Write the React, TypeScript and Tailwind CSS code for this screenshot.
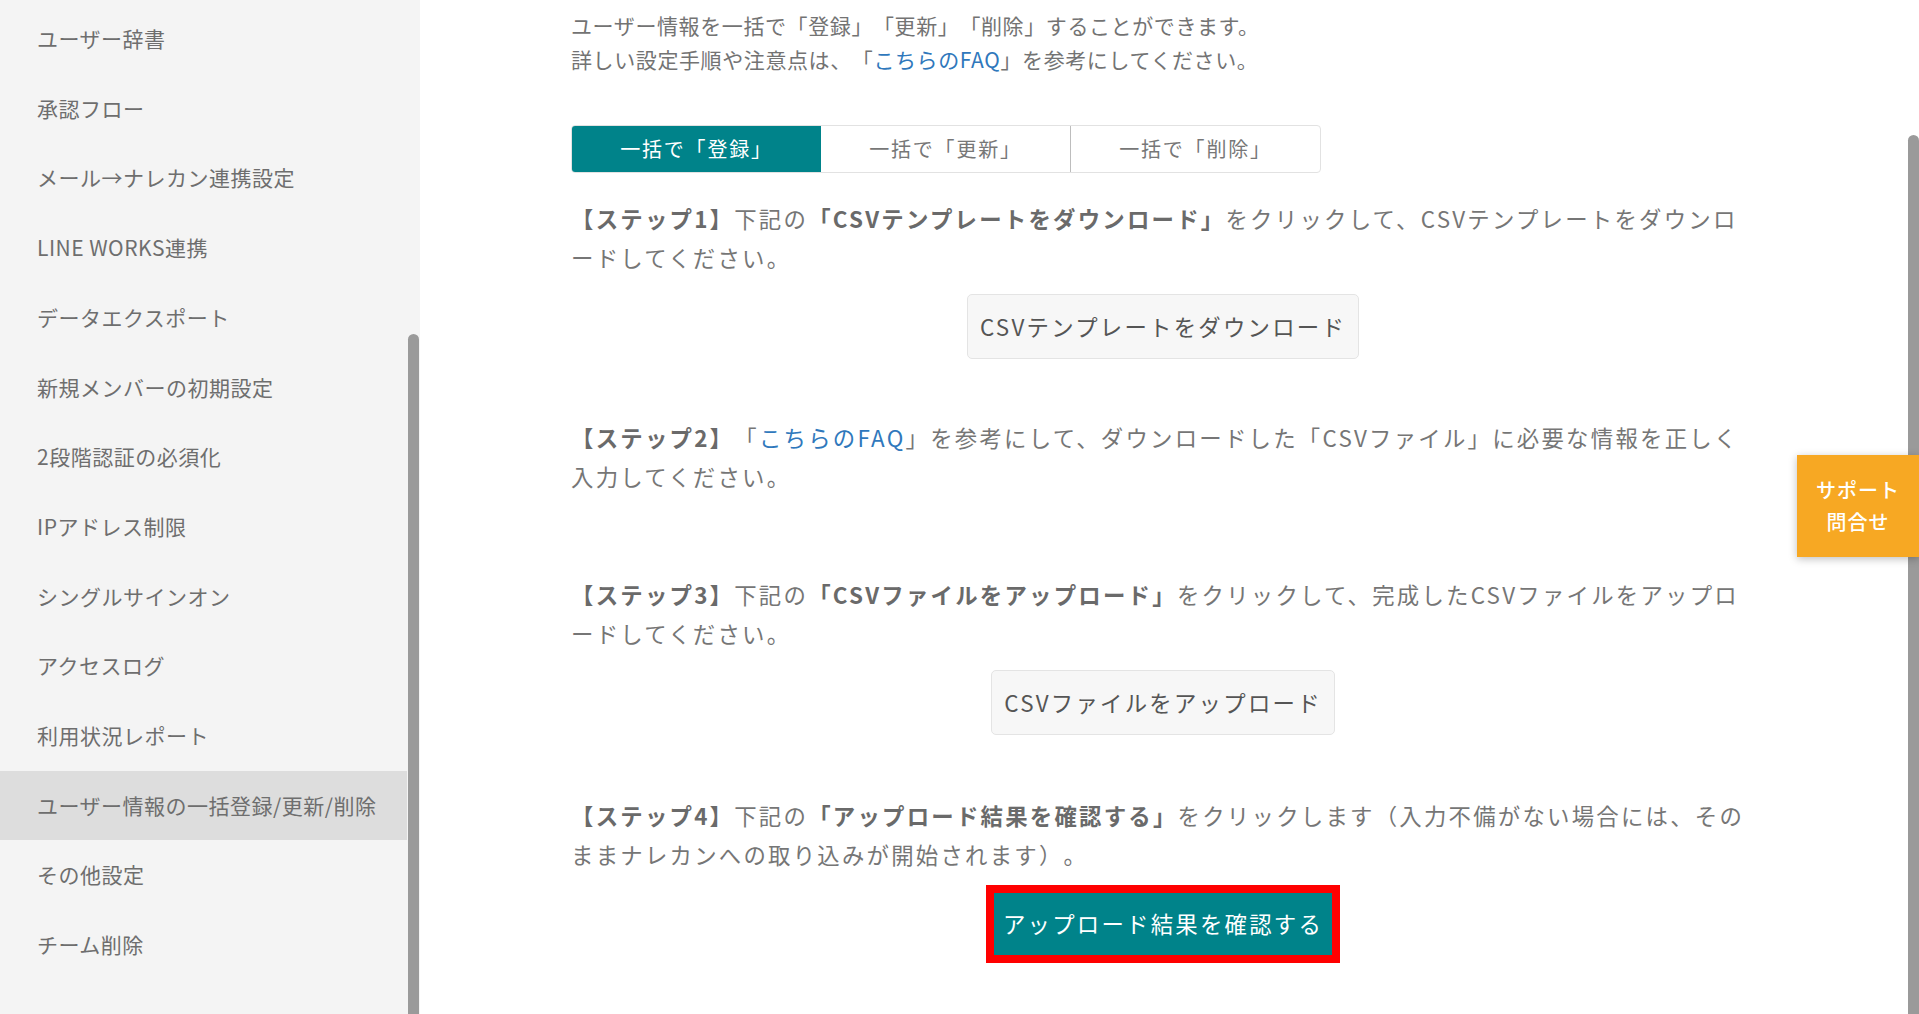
import React from "react"

const menu = [
	"ユーザー辞書",
	"承認フロー",
	"メール→ナレカン連携設定",
	"LINE WORKS連携",
	"データエクスポート",
	"新規メンバーの初期設定",
	"2段階認証の必須化",
	"IPアドレス制限",
	"シングルサインオン",
	"アクセスログ",
	"利用状況レポート",
	"ユーザー情報の一括登録/更新/削除",
	"その他設定",
	"チーム削除",
]

const active = "ユーザー情報の一括登録/更新/削除"

function Sidebar() {
	return (
		<aside className="flex h-full w-[420px] shrink-0 bg-[#f4f4f4]">
			<nav className="w-[407px] pt-[4px]">
				{menu.map((item) => (
					<div
						key={item}
						className={
							item === active
								? "flex h-[69.7px] items-center bg-[#dddddd] pl-[37px] text-[21px] tracking-[0.5px] text-[#6e6e6e]"
								: "flex h-[69.7px] items-center pl-[37px] text-[21px] tracking-[0.5px] text-[#6e6e6e]"
						}
					>
						{item}
					</div>
				))}
			</nav>
			{/* scrollbar */}
			<div className="flex w-[13px] flex-col pl-[1px]">
				<div className="mt-[334px] w-[11px] flex-1 rounded-t-full bg-[#9a9a9a]" />
			</div>
		</aside>
	)
}

function Faq() {
	return <a className="text-[#2f78bc]">こちらのFAQ</a>
}

function Step({ children }: { children: React.ReactNode }) {
	return <p className="text-[22.4px] leading-[39px] tracking-[0.1em] text-[#767676]">{children}</p>
}

function Bold({ children }: { children: React.ReactNode }) {
	return <b className="font-bold text-[#6a6a6a]">{children}</b>
}

function GrayButton({ label }: { label: string }) {
	return (
		<div className="flex justify-center">
			<button className="h-[65px] rounded-[5px] border border-[#e4e4e4] bg-[#f7f7f7] px-[12px] text-[22.4px] tracking-[0.1em] text-[#555]">
				{label}
			</button>
		</div>
	)
}

function Tabs() {
	return (
		<div className="flex h-[48px] w-[750px] overflow-hidden rounded-[4px] border border-[#e2e2e2] text-[20px] tracking-[1.8px]">
			<div className="flex flex-1 items-center justify-center bg-[#00838a] text-white">一括で「登録」</div>
			<div className="flex flex-1 items-center justify-center text-[#777]">一括で「更新」</div>
			<div className="flex flex-1 items-center justify-center border-l border-[#bdbdbd] text-[#777]">一括で「削除」</div>
		</div>
	)
}

export default function App() {
	return (
		<div
			lang="ja"
			className="flex h-[1014px] w-full overflow-hidden bg-white font-['Noto_Sans_CJK_JP','Noto_Sans',sans-serif] [line-break:loose] [text-spacing-trim:space-all]"
		>
			<Sidebar />

			<main className="relative flex flex-1">
				<div className="flex-1 pl-[151px] pt-[8px]">
					<div className="w-[1184px]">
						<p className="text-[21px] leading-[34px] tracking-[0.6px] text-[#737373]">
							ユーザー情報を一括で「登録」「更新」「削除」することができます。
							<br />
							詳しい設定手順や注意点は、「<Faq />」を参考にしてください。
						</p>

						<div className="mt-[49px]">
							<Tabs />
						</div>

						<div className="mt-[26px]">
							<Step>
								<Bold>【ステップ1】</Bold>下記の<Bold>「CSVテンプレートをダウンロード」</Bold>
								をクリックして、CSVテンプレートをダウンロードしてください。
							</Step>
						</div>
						<div className="mt-[17px]">
							<GrayButton label="CSVテンプレートをダウンロード" />
						</div>

						<div className="mt-[59px]">
							<Step>
								<Bold>【ステップ2】</Bold>「<Faq />
								」を参考にして、ダウンロードした「CSVファイル」に必要な情報を正しく入力してください。
							</Step>
						</div>

						<div className="mt-[79px]">
							<Step>
								<Bold>【ステップ3】</Bold>下記の<Bold>「CSVファイルをアップロード」</Bold>
								をクリックして、完成したCSVファイルをアップロードしてください。
							</Step>
						</div>
						<div className="mt-[17px]">
							<GrayButton label="CSVファイルをアップロード" />
						</div>

						<div className="mt-[61px]">
							<Step>
								<Bold>【ステップ4】</Bold>下記の<Bold>「アップロード結果を確認する」</Bold>
								をクリックします（入力不備がない場合には、そのままナレカンへの取り込みが開始されます）。
							</Step>
						</div>
						<div className="mt-[11px] flex justify-center">
							<div className="border-[8px] border-[#ff0000]">
								<button className="h-[62px] bg-[#00838a] px-[9px] text-[22.4px] tracking-[0.1em] text-white">
									アップロード結果を確認する
								</button>
							</div>
						</div>
					</div>
				</div>

				{/* page scrollbar */}
				<div className="flex w-[11px] flex-col">
					<div className="mt-[135px] flex-1 rounded-t-full bg-[#9a9a9a]" />
				</div>

				{/* support widget */}
				<div className="absolute right-0 top-[455px] flex h-[102px] w-[122px] flex-col items-center justify-center bg-[#f7a823] text-[20px] font-medium leading-[32px] tracking-[0.05em] text-white shadow-[0_2px_8px_rgba(0,0,0,0.25)]">
					<span>サポート</span>
					<span>問合せ</span>
				</div>
			</main>
		</div>
	)
}
